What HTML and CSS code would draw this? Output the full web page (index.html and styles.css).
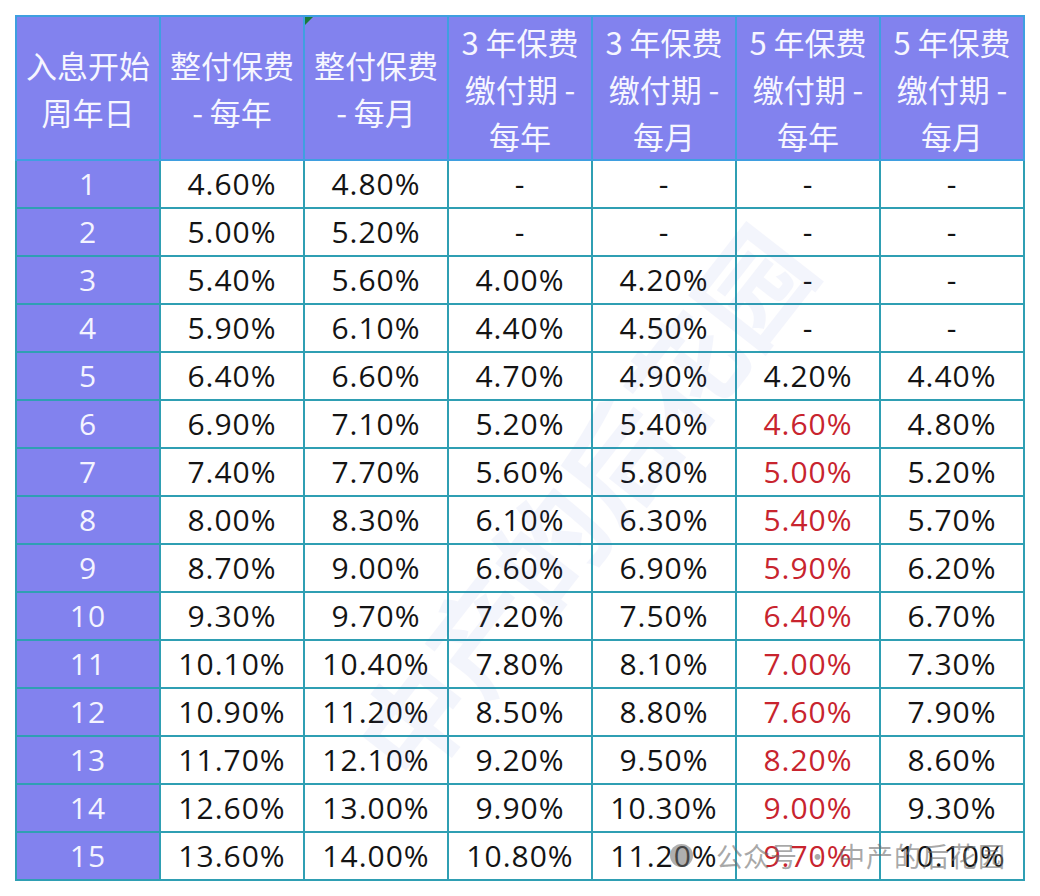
FILE: index.html
```html
<!DOCTYPE html>
<html lang="zh-CN">
<head>
<meta charset="utf-8">
<title>入息表</title>
<link rel="stylesheet" href="styles.css">
</head>
<body>
<div class="wrap">
  <table class="rates">
    <thead>
      <tr>
        <th>入息开始<br>周年日</th>
        <th>整付保费<br>- 每年</th>
        <th class="flagged">整付保费<br>- 每月<span class="flag"></span></th>
        <th>3 年保费<br>缴付期 -<br>每年</th>
        <th>3 年保费<br>缴付期 -<br>每月</th>
        <th>5 年保费<br>缴付期 -<br>每年</th>
        <th>5 年保费<br>缴付期 -<br>每月</th>
      </tr>
    </thead>
    <tbody>
      <tr><th>1</th><td>4.60%</td><td>4.80%</td><td>-</td><td>-</td><td>-</td><td>-</td></tr>
      <tr><th>2</th><td>5.00%</td><td>5.20%</td><td>-</td><td>-</td><td>-</td><td>-</td></tr>
      <tr><th>3</th><td>5.40%</td><td>5.60%</td><td>4.00%</td><td>4.20%</td><td>-</td><td>-</td></tr>
      <tr><th>4</th><td>5.90%</td><td>6.10%</td><td>4.40%</td><td>4.50%</td><td>-</td><td>-</td></tr>
      <tr><th>5</th><td>6.40%</td><td>6.60%</td><td>4.70%</td><td>4.90%</td><td>4.20%</td><td>4.40%</td></tr>
      <tr><th>6</th><td>6.90%</td><td>7.10%</td><td>5.20%</td><td>5.40%</td><td class="red">4.60%</td><td>4.80%</td></tr>
      <tr><th>7</th><td>7.40%</td><td>7.70%</td><td>5.60%</td><td>5.80%</td><td class="red">5.00%</td><td>5.20%</td></tr>
      <tr><th>8</th><td>8.00%</td><td>8.30%</td><td>6.10%</td><td>6.30%</td><td class="red">5.40%</td><td>5.70%</td></tr>
      <tr><th>9</th><td>8.70%</td><td>9.00%</td><td>6.60%</td><td>6.90%</td><td class="red">5.90%</td><td>6.20%</td></tr>
      <tr><th>10</th><td>9.30%</td><td>9.70%</td><td>7.20%</td><td>7.50%</td><td class="red">6.40%</td><td>6.70%</td></tr>
      <tr><th>11</th><td>10.10%</td><td>10.40%</td><td>7.80%</td><td>8.10%</td><td class="red">7.00%</td><td>7.30%</td></tr>
      <tr><th>12</th><td>10.90%</td><td>11.20%</td><td>8.50%</td><td>8.80%</td><td class="red">7.60%</td><td>7.90%</td></tr>
      <tr><th>13</th><td>11.70%</td><td>12.10%</td><td>9.20%</td><td>9.50%</td><td class="red">8.20%</td><td>8.60%</td></tr>
      <tr><th>14</th><td>12.60%</td><td>13.00%</td><td>9.90%</td><td>10.30%</td><td class="red">9.00%</td><td>9.30%</td></tr>
      <tr><th>15</th><td>13.60%</td><td>14.00%</td><td>10.80%</td><td>11.20%</td><td class="red">9.70%</td><td>10.10%</td></tr>
    </tbody>
  </table>
  <div class="wm-diag">中产的后花园</div>
  <div class="wm-foot"><span class="wm-icon"></span><span class="wm-a">公众号</span><span class="wm-dot">·</span><span class="wm-b">中产的后花园</span></div>
</div>
</body>
</html>
```
FILE: styles.css
```css
html, body {
  margin: 0;
  padding: 0;
  background: #ffffff;
}
body {
  font-family: "Noto Sans CJK SC", "Noto Sans", sans-serif;
}
.wrap {
  position: relative;
  width: 1040px;
  height: 896px;
  padding: 15px 0 0 15px;
  box-sizing: border-box;
  overflow: hidden;
}
.rates {
  border-collapse: collapse;
  table-layout: fixed;
  width: 1010px;
}
.rates th,
.rates td {
  border: 2px solid #2f9fb3;
  text-align: center;
  padding: 0;
}
.rates thead th {
  height: 142px;
  background: #8282ee;
  color: #f6f6ff;
  font-weight: 400;
  font-size: 31px;
  line-height: 47px;
  border-color: #3f9fe0;
  position: relative;
  vertical-align: middle;
}
.rates tbody th,
.rates tbody td {
  font-family: "Open Sans", "Noto Sans CJK SC", sans-serif;
  font-size: 30px;
  letter-spacing: 1px;
  height: 46px;
  line-height: 46px;
}
.rates tbody th {
  background: #8282ee;
  color: #f4f4ff;
  font-weight: 400;
}
.rates tbody td {
  background: #ffffff;
  color: #141414;
}
.rates tbody td.red {
  color: #c8242e;
}
.flag {
  position: absolute;
  left: 0;
  top: 0;
  width: 0;
  height: 0;
  border-top: 8px solid #1a7a3a;
  border-right: 8px solid transparent;
}
.wm-diag {
  position: absolute;
  left: 250px;
  top: 420px;
  font-size: 110px;
  font-weight: 700;
  color: #4a5fd0;
  opacity: 0.06;
  transform: rotate(-52deg);
  white-space: nowrap;
  pointer-events: none;
}
.wm-foot {
  position: absolute;
  left: 670px;
  top: 836px;
  display: flex;
  align-items: center;
  font-size: 27px;
  color: rgba(110, 110, 110, 0.6);
  white-space: nowrap;
  pointer-events: none;
}
.wm-icon {
  width: 23px;
  height: 23px;
  border-radius: 50%;
  background: rgba(110, 110, 110, 0.55);
  margin-right: 23px;
}
.wm-dot {
  margin: 0 7px;
}
.wm-b {
  letter-spacing: 1px;
}
```
